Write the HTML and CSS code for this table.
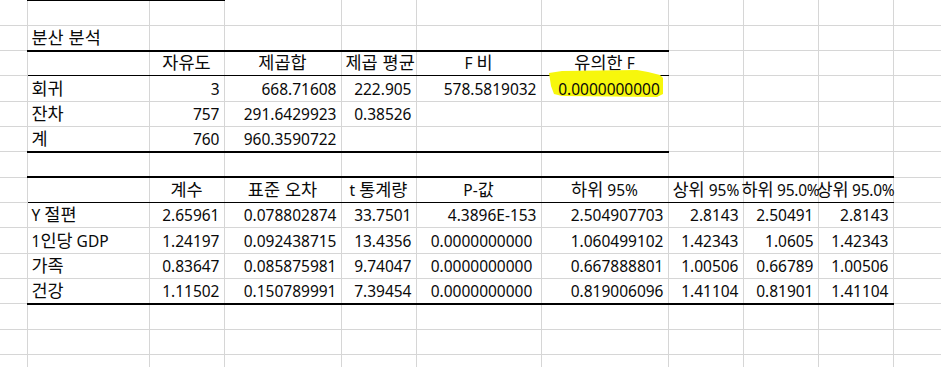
FILE: index.html
```html
<!DOCTYPE html>
<html lang="ko">
<head>
<meta charset="utf-8">
<title>분산 분석</title>
<link rel="stylesheet" href="styles.css">
</head>
<body>
<table class="sheet">
  <colgroup>
    <col class="w27"><col class="w122"><col class="w75"><col class="w117"><col class="w75"><col class="w125"><col class="w127"><col class="w75"><col class="w75"><col class="w75"><col class="w48">
  </colgroup>
  <tbody>
    <tr>
      <td></td><td class="tt"></td><td class="tt"></td><td></td><td></td><td></td><td></td><td></td><td></td><td></td><td></td>
    </tr>
    <tr class="thickA">
      <td></td><td class="l"><span class="ko">분산 분석</span></td><td></td><td></td><td></td><td></td><td></td><td></td><td></td><td></td><td></td>
    </tr>
    <tr class="thinA">
      <td></td><td></td><td class="c"><span class="ko">자유도</span></td><td class="c"><span class="ko">제곱합</span></td><td class="c"><span class="ko">제곱 평균</span></td><td class="c">F <span class="ko">비</span></td><td class="c"><span class="ko">유의한</span> F</td><td></td><td></td><td></td><td></td>
    </tr>
    <tr>
      <td></td><td class="l"><span class="ko">회귀</span></td><td class="r">3</td><td class="r">668.71608</td><td class="r">222.905</td><td class="r">578.5819032</td>
      <td class="c hl"><svg class="marker" width="124" height="34" viewBox="0 0 124 34"><path d="M7 7 L20 5 L95 4 L106 6 L118 9 L121 12 L121 28 L115 31 L20 30 L12 28 L9 20 Z" fill="#f7f70c"/></svg><span class="over">0.0000000000</span></td>
      <td></td><td></td><td></td><td></td>
    </tr>
    <tr>
      <td></td><td class="l"><span class="ko">잔차</span></td><td class="r">757</td><td class="r">291.6429923</td><td class="r">0.38526</td><td></td><td></td><td></td><td></td><td></td><td></td>
    </tr>
    <tr class="thickA">
      <td></td><td class="l"><span class="ko">계</span></td><td class="r">760</td><td class="r">960.3590722</td><td></td><td></td><td></td><td></td><td></td><td></td><td></td>
    </tr>
    <tr class="thickB">
      <td></td><td></td><td></td><td></td><td></td><td></td><td></td><td></td><td></td><td></td><td></td>
    </tr>
    <tr class="thinB">
      <td></td><td></td><td class="c"><span class="ko">계수</span></td><td class="c"><span class="ko">표준 오차</span></td><td class="c">t <span class="ko">통계량</span></td><td class="c">P-<span class="ko">값</span></td><td class="c"><span class="ko">하위</span> 95%</td><td class="c"><span class="ko">상위</span> 95%</td>
      <td class="c ov"><div class="ctr"><span class="ko">하위</span>&nbsp;95.0%</div></td><td class="c ov"><div class="ctr"><span class="ko">상위</span>&nbsp;95.0%</div></td><td></td>
    </tr>
    <tr>
      <td></td><td class="l">Y <span class="ko">절편</span></td><td class="r">2.65961</td><td class="r">0.078802874</td><td class="r">33.7501</td><td class="r">4.3896E-153</td><td class="r">2.504907703</td><td class="r">2.8143</td><td class="r">2.50491</td><td class="r">2.8143</td><td></td>
    </tr>
    <tr>
      <td></td><td class="l">1<span class="ko">인당</span> GDP</td><td class="r">1.24197</td><td class="r">0.092438715</td><td class="r">13.4356</td><td class="c pz">0.0000000000</td><td class="r">1.060499102</td><td class="r">1.42343</td><td class="r">1.0605</td><td class="r">1.42343</td><td></td>
    </tr>
    <tr>
      <td></td><td class="l"><span class="ko">가족</span></td><td class="r">0.83647</td><td class="r">0.085875981</td><td class="r">9.74047</td><td class="c pz">0.0000000000</td><td class="r">0.667888801</td><td class="r">1.00506</td><td class="r">0.66789</td><td class="r">1.00506</td><td></td>
    </tr>
    <tr class="thickB">
      <td></td><td class="l"><span class="ko">건강</span></td><td class="r">1.11502</td><td class="r">0.150789991</td><td class="r">7.39454</td><td class="c pz">0.0000000000</td><td class="r">0.819006096</td><td class="r">1.41104</td><td class="r">0.81901</td><td class="r">1.41104</td><td></td>
    </tr>
    <tr>
      <td></td><td></td><td></td><td></td><td></td><td></td><td></td><td></td><td></td><td></td><td></td>
    </tr>
    <tr>
      <td></td><td></td><td></td><td></td><td></td><td></td><td></td><td></td><td></td><td></td><td></td>
    </tr>
    <tr>
      <td></td><td></td><td></td><td></td><td></td><td></td><td></td><td></td><td></td><td></td><td></td>
    </tr>
  </tbody>
</table>
</body>
</html>
```
FILE: styles.css
```css
html, body {
  margin: 0;
  padding: 0;
  background: #ffffff;
  overflow: hidden;
}
body {
  font-family: "Noto Sans", "Noto Sans CJK KR", sans-serif;
  font-size: 15.5px;
  color: #0a0a0a;
}
.ko {
  font-family: "Noto Sans CJK KR", sans-serif;
  font-size: 17.5px;
  line-height: 18px;
}
.sheet {
  border-collapse: collapse;
  table-layout: fixed;
  width: 941px;
  margin-top: -1px;
}
.w27 { width: 27px; }
.w122 { width: 122px; }
.w75 { width: 75px; }
.w117 { width: 117px; }
.w125 { width: 125px; }
.w127 { width: 127px; }
.w48 { width: 48px; }

.sheet tr { height: 25.33px; }
.sheet td {
  border-style: solid;
  border-color: #d6d6d6;
  border-width: 0 1px 1px 0;
  padding: 0 4px 3px 4px;
  vertical-align: bottom;
  white-space: nowrap;
  overflow: visible;
  line-height: 18px;
}
.sheet td.l { text-align: left; padding-left: 4px; }
.sheet td.r { text-align: right; padding-right: 4px; }
.sheet td.c { text-align: center; }
.sheet td.pz { padding-left: 6px; padding-right: 0; }

/* thick top border of first visible row (B:C) */
.sheet td.tt { border-top: 2px solid #000; }

/* first table spans columns B:G */
.sheet tr.thickA td:nth-child(n+2):nth-child(-n+7) { border-bottom: 2px solid #000; }
.sheet tr.thinA td:nth-child(n+2):nth-child(-n+7) { border-bottom: 1px solid #000; }

/* second table spans columns B:J */
.sheet tr.thickB td:nth-child(n+2):nth-child(-n+10) { border-bottom: 2px solid #000; }
.sheet tr.thinB td:nth-child(n+2):nth-child(-n+10) { border-bottom: 1px solid #000; }

/* highlight */
.sheet td.hl {
  position: relative;
  padding-left: 9px;
  padding-right: 0;
}
.marker {
  position: absolute;
  left: 0;
  top: -10px;
  z-index: 0;
}
.over {
  position: relative;
  z-index: 1;
}

/* overflowing centered headers */
.sheet td.ov {
  padding-left: 0;
  padding-right: 0;
}
.ctr {
  display: flex;
  justify-content: center;
  align-items: baseline;
  width: 100%;
  white-space: nowrap;
  letter-spacing: -0.25px;
}
```
